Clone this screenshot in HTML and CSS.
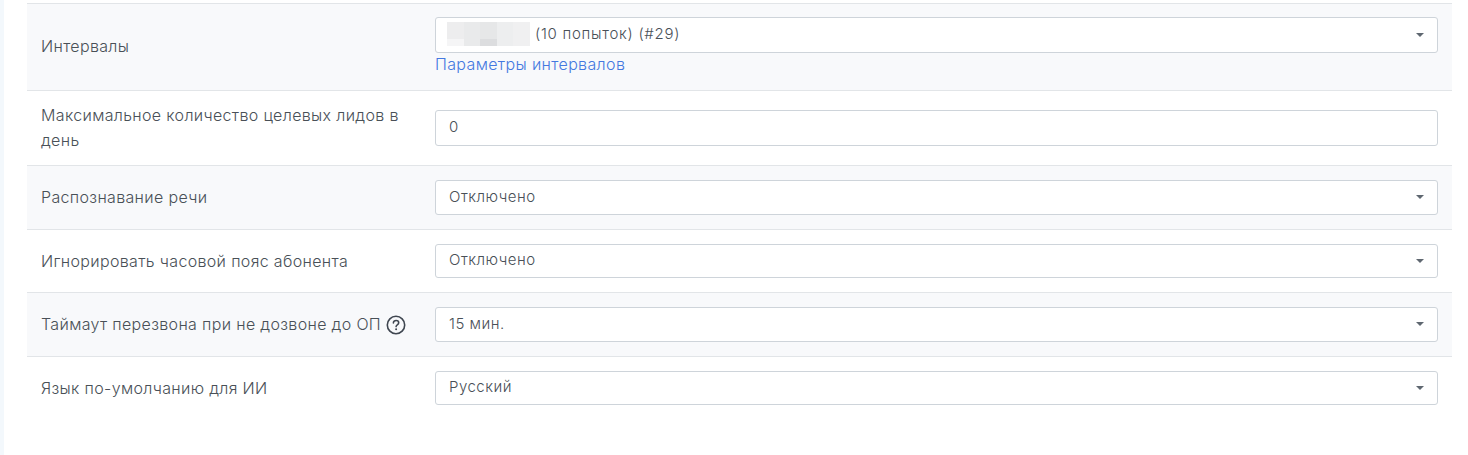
FILE: index.html
```html
<!DOCTYPE html>
<html lang="ru">
<head>
<meta charset="utf-8">
<title>Настройки</title>
<link rel="stylesheet" href="styles.css">
</head>
<body>
<main class="panel">
  <div class="form">
    <div class="row row-alt row-intervals">
      <div class="label">Интервалы</div>
      <div class="field">
        <div class="select">
          <span class="blur"><i></i><i></i><i></i><i></i><i></i></span>
          <span class="value">(10 попыток) (#29)</span>
          <span class="caret"></span>
        </div>
        <a class="link" href="#">Параметры интервалов</a>
      </div>
    </div>
    <div class="row row-tall">
      <div class="label">Максимальное количество целевых лидов в день</div>
      <div class="field"><div class="select input"><span class="value">0</span></div></div>
    </div>
    <div class="row row-alt">
      <div class="label">Распознавание речи</div>
      <div class="field"><div class="select"><span class="value">Отключено</span><span class="caret"></span></div></div>
    </div>
    <div class="row">
      <div class="label">Игнорировать часовой пояс абонента</div>
      <div class="field"><div class="select"><span class="value">Отключено</span><span class="caret"></span></div></div>
    </div>
    <div class="row row-alt">
      <div class="label">Таймаут перезвона при не дозвоне до ОП
        <svg class="help" viewBox="0 0 20 20" width="20" height="20" aria-hidden="true">
          <circle cx="10" cy="10" r="8.7" fill="none" stroke="#3f4650" stroke-width="1.6"/>
          <path d="M7.4 8c0-1.6 1.2-2.5 2.7-2.5 1.5 0 2.6.9 2.6 2.2 0 1.1-.7 1.6-1.4 2.1-.7.5-1.2.9-1.2 1.8" fill="none" stroke="#3f4650" stroke-width="1.6" stroke-linecap="round"/>
          <circle cx="10.1" cy="14.3" r="1" fill="#3f4650"/>
        </svg>
      </div>
      <div class="field"><div class="select"><span class="value">15 мин.</span><span class="caret"></span></div></div>
    </div>
    <div class="row row-last">
      <div class="label">Язык по-умолчанию для ИИ</div>
      <div class="field"><div class="select"><span class="value">Русский</span><span class="caret"></span></div></div>
    </div>
  </div>
</main>
</body>
</html>
```
FILE: styles.css
```css
* { box-sizing: border-box; }
html, body { margin: 0; height: 100%; background: #fff; }
body {
  height: 455px;
  overflow: hidden;
  font-family: "Inter", "Liberation Sans", sans-serif;
  font-size: 15px;
  font-weight: 300;
  color: #495057;
}
.panel {
  height: 455px;
  margin-left: 4px;
  padding: 3px 16px 0 23px;
  background: #fff;
  box-shadow: -4px 0 0 #f3f8fc;
}
.form { border-top: 1px solid #e2e5e8; }
.row {
  display: grid;
  grid-template-columns: 394px 1003px;
  align-items: center;
  padding: 14px 14px;
  border-bottom: 1px solid #e2e5e8;
}
.row-alt { background: #f8f9fb; }
.row-intervals { padding: 13px 14px 17px; }
.row-intervals .label { padding-top: 2px; }
.row-intervals .value { letter-spacing: .72px; }
.row-tall { padding: 12px 14px; }
.row-tall .label { line-height: 25px; }
.row-last { border-bottom: 0; }
.label {
  font-size: 16px;
  letter-spacing: .34px;
  line-height: 26px;
  padding-right: 15px;
}
.help { vertical-align: -5px; }
.select {
  display: flex;
  align-items: center;
  height: 34.5px;
  padding: 0 13px 2px;
  background: #fff;
  border: 1px solid #ced4da;
  border-radius: 3px;
  letter-spacing: .5px;
}
.row-intervals .select { height: 36px; padding-bottom: 3px; }
.input { height: 36px; padding-bottom: 3px; }
.value { flex: 1; }
.caret {
  width: 0; height: 0;
  margin-top: 2px;
  border-left: 4px solid transparent;
  border-right: 4px solid transparent;
  border-top: 4px solid #5f6770;
}
.blur {
  display: flex;
  width: 83px;
  height: 24px;
  margin: 0 5px 0 -2px;
  background: #eff0f1;
}
.blur i { flex: 1; background: #f0f0f1; }
.blur i:nth-child(2) { background: #e9eaeb; }
.blur i:nth-child(3) { background: linear-gradient(#e6e7e8 70%, #dcdddf 70%); }
.blur i:nth-child(4) { background: #edeeef; }
.blur i:nth-child(1) { background: linear-gradient(#ededee 70%, #f5f5f6 70%); }
.link {
  display: block;
  margin-top: 3px;
  font-size: 16px;
  letter-spacing: .36px;
  line-height: 17px;
  color: #4478e0;
  text-decoration: none;
}
```
